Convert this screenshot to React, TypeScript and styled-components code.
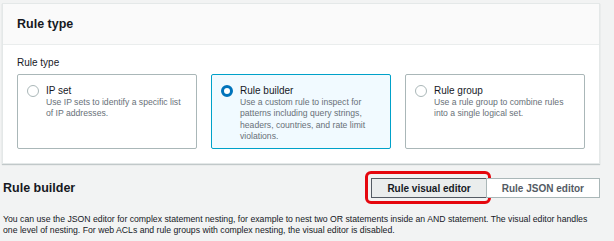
import React from "react";
import styled, { createGlobalStyle } from "styled-components";

const Global = createGlobalStyle`
  html, body { margin: 0; padding: 0; background: #f2f3f3; }
  body { font-family: "Liberation Sans", Arial, sans-serif; color: #16191f; }
  * { box-sizing: border-box; }
`;

const Page = styled.div`
  width: 614px;
  height: 241px;
  padding: 3px 14px 0 2px;
  overflow: hidden;
`;

const Card = styled.section`
  background: #fff;
  border: 1px solid #e4e8e8;
  box-shadow: 0 1px 1px rgba(0, 28, 36, 0.2);
`;

const CardHeader = styled.header`
  height: 41px;
  background: #fafafa;
  border-bottom: 1px solid #eaeded;
  display: flex;
  align-items: center;
  padding-left: 14px;
`;

const H2 = styled.h2`
  margin: 0;
  font-size: 12.5px;
  font-weight: 700;
  color: #16191f;
`;

const CardBody = styled.div`
  padding: 12px 13px 14px 14px;
`;

const FieldLabel = styled.div`
  font-size: 10px;
  line-height: 12px;
  margin-bottom: 5px;
`;

const Tiles = styled.div`
  display: grid;
  grid-template-columns: repeat(3, 180px);
  column-gap: 14px;
`;

const Tile = styled.label<{ $selected?: boolean }>`
  height: 75px;
  border: 1px solid ${(p) => (p.$selected ? "#00a1c9" : "#aab7b8")};
  background: ${(p) => (p.$selected ? "#f1faff" : "#fff")};
  border-radius: 2px;
  display: flex;
  align-items: flex-start;
  padding: 9px 8px 0 9px;
`;

const Radio = styled.span<{ $checked?: boolean }>`
  flex: none;
  width: 12px;
  height: 12px;
  margin-top: 1px;
  margin-right: 7px;
  border-radius: 50%;
  ${(p) =>
    p.$checked
      ? `border: 3.5px solid #0073bb; background: #fff;`
      : `border: 1px solid #aab7b8; background: #fff;`}
`;

const TileText = styled.div`
  display: flex;
  flex-direction: column;
`;

const TileTitle = styled.div`
  font-size: 10px;
  line-height: 13px;
  color: #16191f;
`;

const TileDesc = styled.div`
  font-size: 8.65px;
  line-height: 11.3px;
  color: #687078;
`;

const Row = styled.div`
  display: flex;
  align-items: center;
  justify-content: space-between;
  padding-left: 1px;
  margin-top: 14px;
`;

const H3 = styled.h3`
  margin: 0;
  font-size: 12.5px;
  font-weight: 700;
  color: #16191f;
`;

const Segmented = styled.div`
  display: flex;
`;

const SegButton = styled.button<{ $active?: boolean; $marked?: boolean }>`
  position: relative;
  height: 20px;
  padding: 0 15px;
  font-family: inherit;
  font-size: 10px;
  font-weight: 700;
  color: ${(p) => (p.$active ? "#16191f" : "#545b64")};
  background: ${(p) => (p.$active ? "#eaeded" : "#fff")};
  border: 1px solid ${(p) => (p.$active ? "#545b64" : "#aab7b8")};
  margin-left: ${(p) => (p.$active ? "0" : "-1px")};
  &::after {
    content: "";
    display: ${(p) => (p.$marked ? "block" : "none")};
    position: absolute;
    top: -8px;
    left: -7px;
    right: -5px;
    bottom: -7px;
    border: 3px solid #e5070e;
    border-radius: 6px;
    pointer-events: none;
  }
`;

const Note = styled.p`
  margin: 16px 0 0 1px;
  font-size: 8.7px;
  line-height: 10.5px;
  color: #16191f;
  width: 600px;
`;

const options = [
  {
    title: "IP set",
    desc: "Use IP sets to identify a specific list of IP addresses.",
  },
  {
    title: "Rule builder",
    desc: "Use a custom rule to inspect for patterns including query strings, headers, countries, and rate limit violations.",
    selected: true,
  },
  {
    title: "Rule group",
    desc: "Use a rule group to combine rules into a single logical set.",
  },
];

export default function App() {
  return (
    <Page>
      <Global />
      <Card>
        <CardHeader>
          <H2>Rule type</H2>
        </CardHeader>
        <CardBody>
          <FieldLabel>Rule type</FieldLabel>
          <Tiles>
            {options.map((o) => (
              <Tile key={o.title} $selected={o.selected}>
                <Radio $checked={o.selected} />
                <TileText>
                  <TileTitle>{o.title}</TileTitle>
                  <TileDesc>{o.desc}</TileDesc>
                </TileText>
              </Tile>
            ))}
          </Tiles>
        </CardBody>
      </Card>
      <Row>
        <H3>Rule builder</H3>
        <Segmented>
          <SegButton $active $marked>
            Rule visual editor
          </SegButton>
          <SegButton>Rule JSON editor</SegButton>
        </Segmented>
      </Row>
      <Note>
        You can use the JSON editor for complex statement nesting, for example to nest two OR
        statements inside an AND statement. The visual editor handles one level of nesting. For
        web ACLs and rule groups with complex nesting, the visual editor is disabled.
      </Note>
    </Page>
  );
}
